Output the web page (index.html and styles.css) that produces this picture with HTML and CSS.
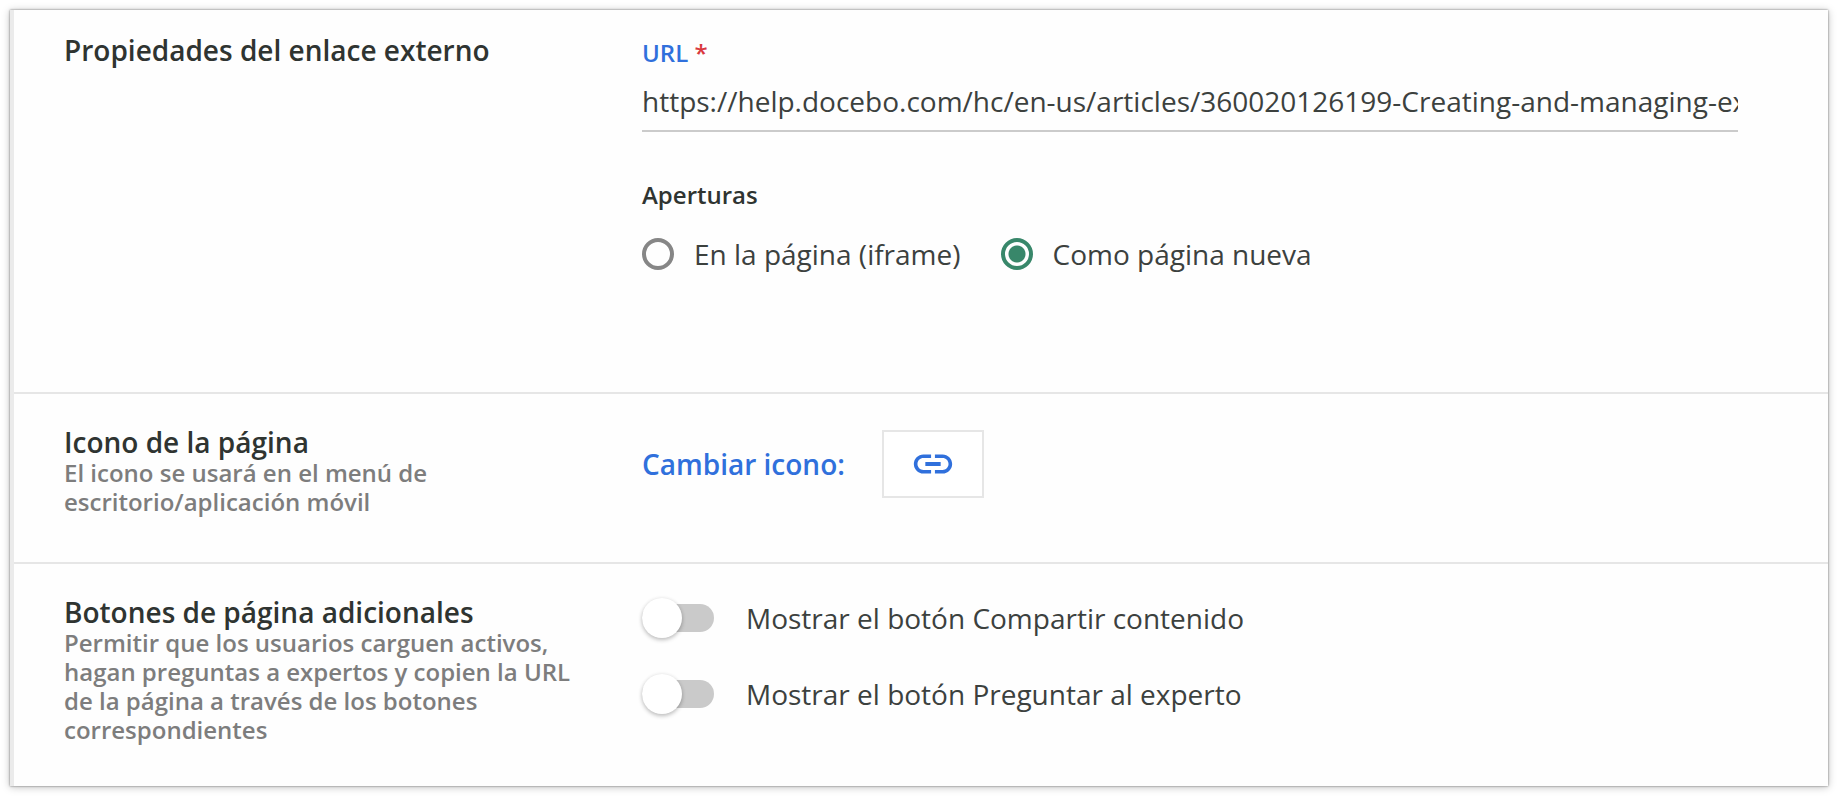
FILE: index.html
```html
<!DOCTYPE html>
<html lang="es">
<head>
<meta charset="utf-8">
<meta name="viewport" content="width=device-width, initial-scale=1">
<title>Propiedades del enlace externo</title>
<link rel="stylesheet" href="styles.css">
</head>
<body>
<main class="card">
  <section class="section section-link">
    <div class="section-info">
      <h2 class="section-title">Propiedades del enlace externo</h2>
    </div>
    <div class="section-content">
      <label class="field-label" for="url">URL <span class="required">*</span></label>
      <input class="field-input" id="url" type="text" required value="https://help.docebo.com/hc/en-us/articles/360020126199-Creating-and-managing-external-pages">
      <fieldset class="radio-group">
        <legend class="radio-legend">Aperturas</legend>
        <div class="radio-options">
          <label class="radio"><input class="radio-input" type="radio" name="opening" value="iframe"> En la página (iframe)</label>
          <label class="radio"><input class="radio-input" type="radio" name="opening" value="new" checked> Como página nueva</label>
        </div>
      </fieldset>
    </div>
  </section>
  <section class="section section-icon">
    <div class="section-info">
      <h2 class="section-title">Icono de la página</h2>
      <p class="section-description">El icono se usará en el menú de escritorio/aplicación móvil</p>
    </div>
    <div class="section-content icon-picker">
      <span class="icon-label" id="icon-label">Cambiar icono:</span>
      <button class="icon-button" type="button" aria-labelledby="icon-label">
        <svg class="icon" viewBox="0 0 24 24" aria-hidden="true"><path d="M3.9 12c0-1.71 1.39-3.1 3.1-3.1h4V7H7c-2.76 0-5 2.24-5 5s2.24 5 5 5h4v-1.9H7c-1.71 0-3.1-1.39-3.1-3.1zM8 13h8v-2H8v2zm9-6h-4v1.9h4c1.71 0 3.1 1.39 3.1 3.1s-1.39 3.1-3.1 3.1h-4V17h4c2.76 0 5-2.24 5-5s-2.24-5-5-5z"/></svg>
      </button>
    </div>
  </section>
  <section class="section section-buttons">
    <div class="section-info">
      <h2 class="section-title">Botones de página adicionales</h2>
      <p class="section-description">Permitir que los usuarios carguen activos, hagan preguntas a expertos y copien la URL de la página a través de los botones correspondientes</p>
    </div>
    <div class="section-content toggles">
      <label class="toggle"><input class="toggle-input" type="checkbox" role="switch"> Mostrar el botón Compartir contenido</label>
      <label class="toggle"><input class="toggle-input" type="checkbox" role="switch"> Mostrar el botón Preguntar al experto</label>
    </div>
  </section>
</main>
</body>
</html>
```
FILE: styles.css
```css
* {
  box-sizing: border-box;
}

body {
  margin: 0;
  padding: 10px;
  background: #fff;
  color: #3c413e;
  font: 400 28px/38px "Open Sans", sans-serif;
}

.card {
  border-left: 4px solid #ebebeb;
  background: #fefefe;
  box-shadow: 0 0 2px rgba(0, 0, 0, 0.5), 0 1px 8px rgba(0, 0, 0, 0.25);
}

.section {
  display: grid;
  grid-template-columns: 512px minmax(0, 1fr);
  column-gap: 66px;
  padding: 32px 90px 46px 50px;
}

.section + .section {
  border-top: 2px solid #e6e6e6;
}

.section-link {
  padding-top: 24px;
  padding-bottom: 119px;
}

.section-buttons {
  padding-bottom: 42px;
}

.section-title {
  margin: 0;
  color: #2f3431;
  font-size: 28px;
  font-weight: 600;
  line-height: 32px;
}

.section-description {
  margin: 0;
  color: #7d7d7d;
  font-size: 24px;
  font-weight: 600;
  line-height: 29px;
}

.section-content {
  padding-top: 4px;
}

.field-label {
  display: block;
  color: #3070dc;
  font-size: 24px;
  font-weight: 600;
  line-height: 29px;
}

.required {
  color: #d9393e;
}

.field-input {
  display: block;
  width: 100%;
  height: 50px;
  margin-top: 15px;
  padding: 0 0 10px;
  border: 0;
  border-bottom: 2px solid #cbcbcb;
  border-radius: 0;
  background: transparent;
  color: inherit;
  font: inherit;
  outline: 0;
}

.radio-group {
  margin: 48px 0 0;
  padding: 0;
  border: 0;
}

.radio-legend {
  padding: 0;
  color: #2f3431;
  font-size: 24px;
  font-weight: 600;
  line-height: 29px;
}

.radio-options {
  display: flex;
  flex-wrap: wrap;
  gap: 40px;
  padding-top: 26px;
}

.radio {
  display: flex;
  align-items: center;
  gap: 20px;
}

.radio-input {
  flex: none;
  appearance: none;
  width: 32px;
  height: 32px;
  margin: 0;
  border: 4px solid #868686;
  border-radius: 50%;
}

.radio-input:checked {
  border-color: #38876a;
  background: radial-gradient(circle, #38876a 8px, transparent 9px);
}

.icon-picker {
  display: flex;
  align-items: center;
  align-self: start;
  gap: 37px;
}

.icon-label {
  color: #3070dc;
  font-weight: 600;
}

.icon-button {
  display: flex;
  align-items: center;
  justify-content: center;
  width: 102px;
  height: 68px;
  padding: 0;
  border: 2px solid #e6e6e6;
  background: #fff;
  color: #3070dc;
}

.icon {
  width: 46px;
  height: 46px;
  fill: currentColor;
}

.toggles {
  display: flex;
  flex-direction: column;
  align-items: flex-start;
  gap: 36px;
  padding-top: 2px;
}

.toggle {
  display: flex;
  align-items: center;
  gap: 32px;
  height: 40px;
}

.toggle-input {
  position: relative;
  flex: none;
  appearance: none;
  width: 72px;
  height: 28px;
  margin: 0;
  border-radius: 14px;
  background: #cacaca;
}

.toggle-input::before {
  content: "";
  position: absolute;
  top: -6px;
  left: 0;
  width: 40px;
  height: 40px;
  border-radius: 50%;
  background: #fff;
  box-shadow: 0 2px 4px rgba(0, 0, 0, 0.24), 0 0 4px rgba(0, 0, 0, 0.06);
}

.toggle-input:checked::before {
  left: 32px;
}
```
